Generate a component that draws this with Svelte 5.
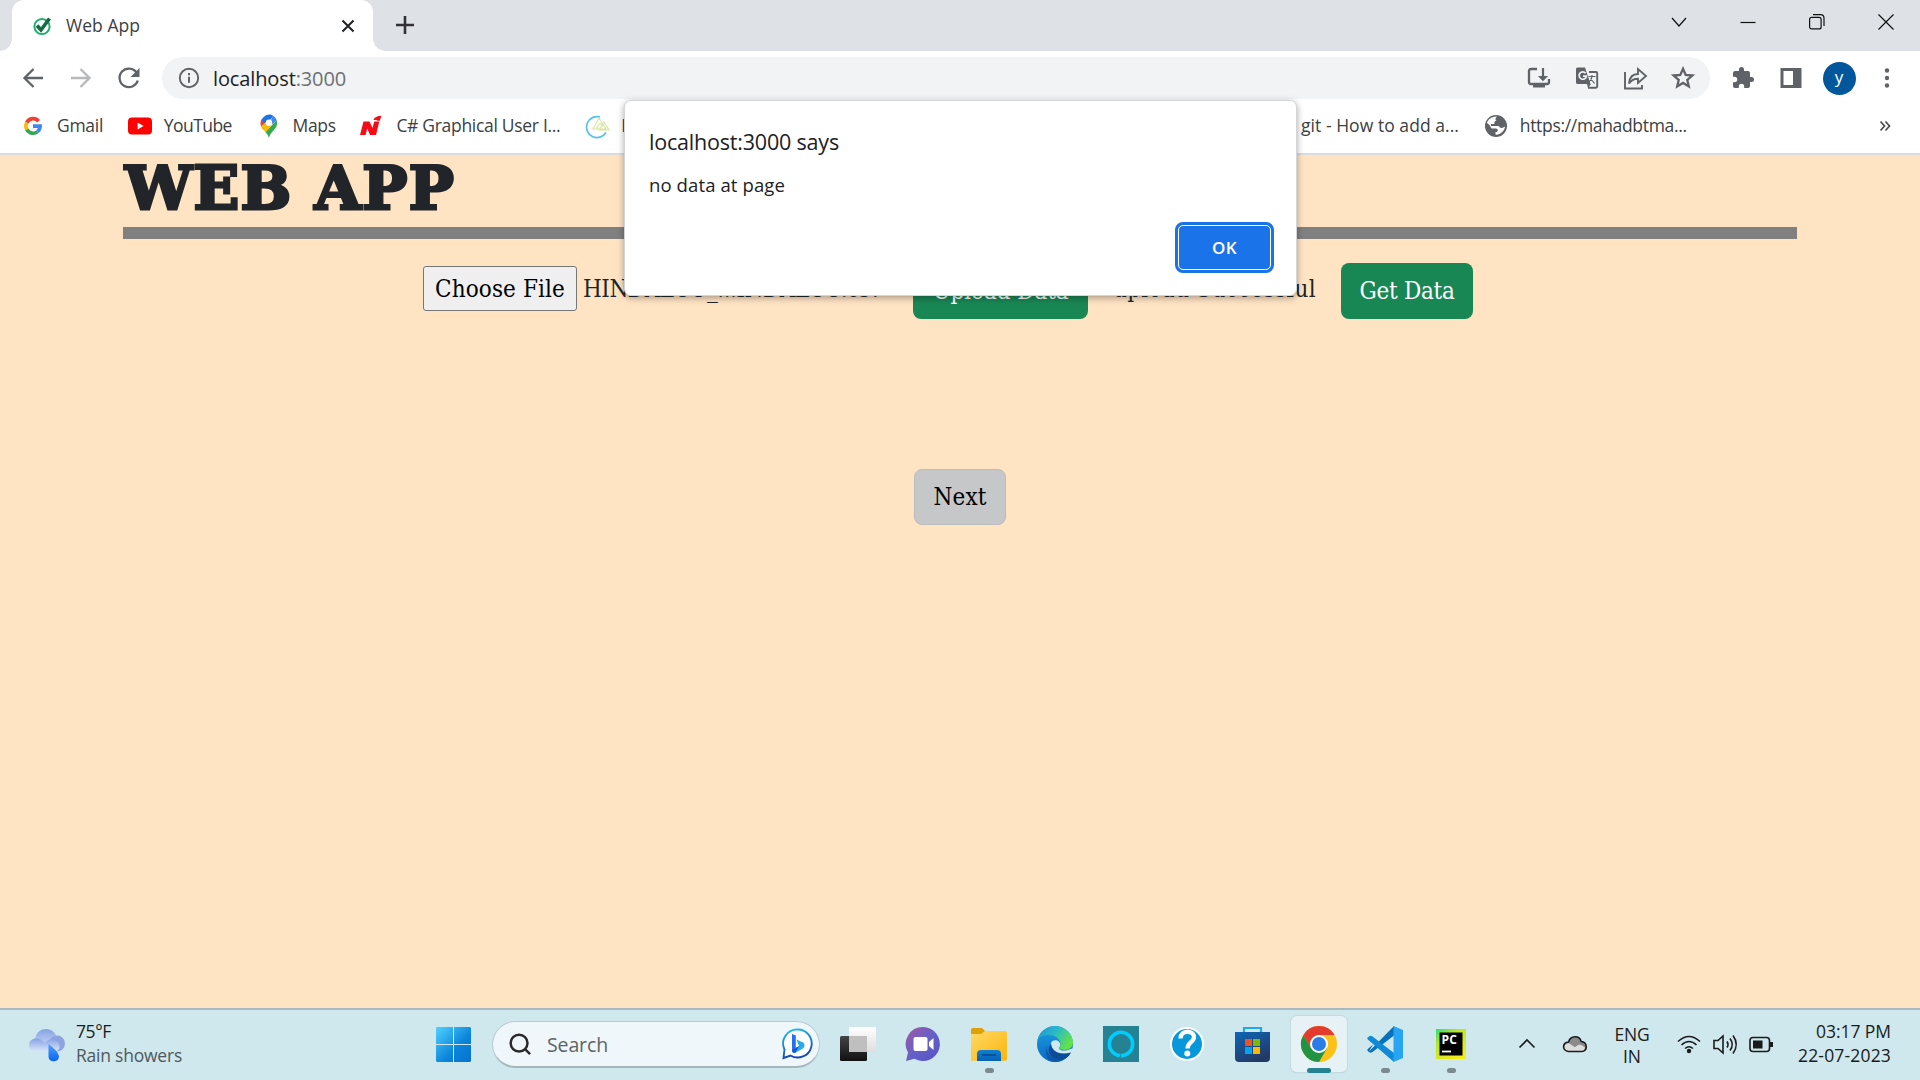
<script>
  const bookmarks = [
    { icon: 'google', label: 'Gmail', width: 46 },
    { icon: 'youtube', label: 'YouTube', width: 68 },
    { icon: 'maps', label: 'Maps', width: 43 },
    { icon: 'ni', label: 'C# Graphical User I...', width: 164 },
    { icon: 'triangles', label: 'F', width: 619 },
    { icon: 'blank', label: 'git - How to add a...', width: 158 },
    { icon: 'globe', label: 'https://mahadbtma...', width: 167 },
  ];

  const apps = [
    { icon: 'taskview' },
    { icon: 'chat' },
    { icon: 'explorer', running: true },
    { icon: 'edge' },
    { icon: 'alexa' },
    { icon: 'help' },
    { icon: 'store' },
    { icon: 'chrome', active: true },
    { icon: 'vscode', running: true },
    { icon: 'pycharm', running: true },
  ];

  // Spaces the letters of a label so that it fills the given width.
  function fit(node, width) {
    const natural = node.getBoundingClientRect().width;
    const count = node.textContent.length;
    if (count > 1) node.style.letterSpacing = `${(width - natural) / count}px`;
  }
</script>

{#snippet bookmarkIcon(name)}
  <svg class="bm-icon" viewBox="0 0 24 24">
    {#if name === 'google'}
      <g fill="none" stroke-width="3.7">
        <path d="M17.6 7.2A7.1 7.1 0 0 0 5.8 8.6" stroke="#ea4335" />
        <path d="M5.8 8.6a7.1 7.1 0 0 0 0 6.8" stroke="#fbbc05" />
        <path d="M5.8 15.4a7.1 7.1 0 0 0 10.8 2.2" stroke="#34a853" />
        <path d="M16.6 17.6A7.1 7.1 0 0 0 19.1 12.1H12" stroke="#4285f4" />
      </g>
    {:else if name === 'youtube'}
      <rect y="3.6" width="24" height="16.8" rx="4" fill="#f00" />
      <path d="M9.6 8.4v7.2l6-3.6z" fill="#fff" />
    {:else if name === 'maps'}
      <path d="M4.6 5.2 12 11 6.4 15.8C4.4 13 3.5 11.4 3.5 9a8 8 0 0 1 1.100-3.800z" fill="#ea4335" />
      <path d="M6.200 3.400A8.300 8.300 0 0 1 12 .6c1.500 0 3.100.400 4.400 1.300L9 10.800 4.600 5.600z" fill="#1a73e8" />
      <path d="M16 1.700A8.400 8.400 0 0 1 19.700 6L9.400 16z" fill="#4285f4" />
      <path d="M4.200 12 9 8l6.500 2-6.800 8.600C7 16.200 5 14.200 4.200 12z" fill="#fbbc04" />
      <path d="M19.700 6c1 3 .3 6-1.400 8.300C15.500 18 13.300 19.400 12 24c-.8-2.400-2-4-3.400-5.700z" fill="#34a853" />
      <circle cx="12" cy="8.700" r="3.200" fill="#fff" />
    {:else if name === 'ni'}
      <path d="M0 21 3.500 7.500h6L12.500 14l1.800-6.500h5L16 21h-6L7.300 14.500 5.500 21z" fill="#f50b16" />
      <path d="m13 5.500 6.500 1.500 2-5h-3.500l-.6 1.700z" fill="#f50b16" />
      <path d="m14.500 5 4.500-2" stroke="#f50b16" stroke-width="2" />
    {:else if name === 'triangles'}
      <path d="M15 3A10.500 10.500 0 1 0 21 18.500" fill="none" stroke="#55c1f2" stroke-width="1.700" />
      <path d="m8 15 6-11 7 11zM11 15l4-6 3 3M14 16l5-8 5 8z" fill="none" stroke="#d7e59a" stroke-width="1.100" />
    {:else if name === 'globe'}
      <circle cx="12" cy="12" r="11" fill="#5f6368" />
      <path d="M3 9c.3-2.500 3-5.400 7-6.300l3-.2c-2 2-2 3-.5 4-2 .5-2.500 1.800-2 3.500H7v2h7c1.500 0 1.700 2 3.500 2 1.500 0 2-1 3.600-1.500-.6 4-3.600 7.500-8.200 8.200l-1.400-.1V18h1.500q2-3-1-3.500H7.500L5.500 11z" fill="#fff" />
    {/if}
  </svg>
{/snippet}

{#snippet appIcon(name)}
  <svg class="app-icon" viewBox="0 0 36 36">
    {#if name === 'taskview'}
      <rect x="1" y="10" width="27" height="25" rx="1.500" fill="url(#tvDark)" />
      <rect x="10" y="1" width="27" height="25" rx="1" fill="url(#tvLight)" />
      <path d="M10 10h18v16H10z" fill="#bfbfbf" />
    {:else if name === 'chat'}
      <path d="M18 1a17 17 0 1 1-8.500 31.800L1 35l2-8.500A17 17 0 0 1 18 1z" fill="url(#chatFill)" />
      <rect x="8.500" y="11" width="14" height="14" rx="2" fill="#fff" />
      <path d="m24 16 4.500-4v12L24 20z" fill="#fff" />
    {:else if name === 'explorer'}
      <path d="M0 4q0-2 2-2h9l4 4-4 6H0z" fill="#dfa004" />
      <path d="M0 8h10l4-3h20q2 0 2 2v26q0 1.700-2 1.700H0z" fill="url(#folderFill)" />
      <path d="M6 35v-7q0-4 4-4h16q4 0 4 4v7z" fill="url(#folderTab)" />
      <path d="M11 29h14" stroke="#064f8f" stroke-width="1.800" />
    {:else if name === 'edge'}
      <circle cx="18" cy="18" r="18" fill="url(#edgeBlue)" />
      <path d="M.4 15A18 18 0 0 1 36 16c.3 5-3.500 8-8.500 8-3 0-5.500-.6-5.500-2.200 0-1 1.500-1.600 1.500-4.200C23 12 17 9 11.500 9 6 9 2 11 .4 15z" fill="url(#edgeGreen)" />
      <path d="M14 14.500c-6 4-5 12 .5 16.500 5 4 12 3 16 0A18 18 0 0 1 17 36C11 35 8 30 9 24c.5-4 2.500-8 5-9.500z" fill="#0a55a5" opacity=".8" />
      <path d="M14.200 16.500c2-4 9.500-2.500 9 2.500-.2 2-1.500 2.300-1.300 3.200.5 2.400 6 3.300 11.600.8L37 22v6l-4 .2c-4 2-8.500 2.200-12-.2-4.500-2.800-8-7.500-6.800-11.500z" fill="#cfe8ee" />
      <path d="M14.200 18c0 6 7 12 19.800 8.500-3.500 7-12 9-17 6C11 29 10 22 14.200 18z" fill="#0b4c98" />
    {:else if name === 'alexa'}
      <path d="M0 0h36v36H0z" fill="#258292" />
      <circle cx="18" cy="18" r="11.700" fill="none" stroke="#0cf" stroke-width="3.500" />
      <path d="m16 32 2-4.500v3.500z" fill="#258292" />
    {:else if name === 'help'}
      <circle cx="18" cy="18" r="16" fill="#0698da" stroke="#fff" stroke-width="2" />
      <path d="M11.500 12.500c0-9 13.500-8.500 13.500-1.500 0 5.500-6.500 5-6.500 11.500" fill="none" stroke="#fff" stroke-width="4.300" />
      <circle cx="18.300" cy="27.600" r="3" fill="#fff" />
    {:else if name === 'store'}
      <path d="M9 8V2h17v6" fill="none" stroke="#22a9e8" stroke-width="2.200" />
      <path d="M0 6h35v26q0 4-4 4H4q-4 0-4-4z" fill="url(#storeFill)" />
      <path d="M10 13h7v7h-7z" fill="#f25022" /><path d="M18 13h7v7h-7z" fill="#7fba00" />
      <path d="M10 21h7v7h-7z" fill="#00a4ef" /><path d="M18 21h7v7h-7z" fill="#ffb900" />
    {:else if name === 'chrome'}
      <circle cx="18" cy="18" r="18" fill="#fbc116" />
      <path d="M2.400 9A18 18 0 0 1 33.600 9H18L10.200 22.500z" fill="#e33b2e" />
      <path d="M2.400 9A18 18 0 0 0 18 36l7.800-13.500H10.200z" fill="#229342" />
      <circle cx="18" cy="18" r="9" fill="#fff" />
      <circle cx="18" cy="18" r="7" fill="#2a7de9" />
    {:else if name === 'vscode'}
      <path d="M2 25.500 27 0v9.500L5.500 26q-2 1.500-3.500 0-2.700-1.800-1.200-3L6 18.500" fill="#0871b9" />
      <path d="M2 10.500q1.500-1.500 3.500 0L27 27v9L.8 13.500q-1.500-1.300 1.200-3z" fill="#1089d6" />
      <path d="m26.500 0 9.500 4v28l-9.500 4z" fill="#27a5f3" />
    {:else if name === 'pycharm'}
      <path d="M3 3h30v30H3z" fill="url(#pcFill)" />
      <path d="M6.500 6.500h23v23h-23z" fill="#000" />
      <path d="M9 25.500h9" stroke="#fff" stroke-width="1.800" />
      <text x="8.600" y="17.800" class="pc">PC</text>
    {/if}
  </svg>
{/snippet}

<div class="screen">
  <svg class="defs" width="0" height="0">
    <defs>
      <linearGradient id="tvDark" x2="0" y2="1"><stop stop-color="#444" /><stop offset="1" stop-color="#111" /></linearGradient>
      <linearGradient id="tvLight" x2="0" y2="1"><stop stop-color="#fff" /><stop offset="1" stop-color="#dedede" /></linearGradient>
      <linearGradient id="chatFill" x2="1" y2="1"><stop stop-color="#a05aa0" /><stop offset=".5" stop-color="#6660c8" /><stop offset="1" stop-color="#5353c4" /></linearGradient>
      <linearGradient id="folderFill" x2="1" y2="1"><stop stop-color="#ffd968" /><stop offset="1" stop-color="#fbb508" /></linearGradient>
      <linearGradient id="folderTab" x2="0" y2="1"><stop stop-color="#0f7fd6" /><stop offset="1" stop-color="#0761b3" /></linearGradient>
      <linearGradient id="edgeBlue" x2="0" y2="1"><stop stop-color="#1aa1dd" /><stop offset="1" stop-color="#0c67c8" /></linearGradient>
      <linearGradient id="edgeGreen" x2="1" y2=".5"><stop stop-color="#1d8fd6" /><stop offset=".5" stop-color="#2bb9c9" /><stop offset="1" stop-color="#62e14a" /></linearGradient>
      <linearGradient id="storeFill" x2=".5" y2="1"><stop stop-color="#0c67b8" /><stop offset="1" stop-color="#233a66" /></linearGradient>
      <linearGradient id="pcFill" x2=".7" y2="1"><stop stop-color="#22e07c" /><stop offset=".35" stop-color="#b6e62c" /><stop offset="1" stop-color="#f3ea1c" /></linearGradient>
      <linearGradient id="winFill" gradientUnits="userSpaceOnUse" x1="0" y1="0" x2="35" y2="35"><stop stop-color="#4fd3ff" /><stop offset=".6" stop-color="#0b84da" /><stop offset="1" stop-color="#0672cf" /></linearGradient>
      <linearGradient id="bingFill" x2=".3" y2="1"><stop stop-color="#21c7f3" /><stop offset="1" stop-color="#1746b5" /></linearGradient>
      <linearGradient id="cloudFill" x2="0" y2="1"><stop stop-color="#86a2e4" /><stop offset="1" stop-color="#dbe5fb" /></linearGradient>
      <linearGradient id="dropFill" x2="0" y2="1"><stop stop-color="#4ea3fb" /><stop offset="1" stop-color="#0a63f2" /></linearGradient>
    </defs>
  </svg>

  <header class="tabstrip">
    <div class="tab">
      <svg class="favicon" viewBox="0 0 20 20">
        <circle cx="10" cy="10.500" r="7.600" fill="none" stroke="#1fae6c" stroke-width="2" />
        <path d="m5 9.500 4 4.500 8.500-11.500" fill="none" stroke="#146c43" stroke-width="3.600" />
      </svg>
      <span class="tab-title" use:fit={74}>Web App</span>
      <svg class="tab-close" viewBox="0 0 14 14"><path d="m1.500 1.500 11 11m0-11-11 11" /></svg>
    </div>
    <svg class="new-tab" viewBox="0 0 18 18"><path d="M9 0v18M0 9h18" /></svg>
    <div class="window-controls">
      <svg viewBox="0 0 18 18"><path d="m2 5 7 8 7-8" /></svg>
      <svg viewBox="0 0 18 18"><path d="M1.500 9.500h15" /></svg>
      <svg viewBox="0 0 18 18"><rect x="1.600" y="4.400" width="11.500" height="11.500" rx="2" /><path d="M5 1.700h7.500q3.500 0 3.500 3.500V13" /></svg>
      <svg viewBox="0 0 18 18"><path d="m1.500 1.500 15 15m0-15-15 15" /></svg>
    </div>
  </header>

  <nav class="toolbar">
    <div class="cell"><svg viewBox="0 0 24 24"><path d="M22 12H4M12.500 3 3.500 12l9 9" class="line" /></svg></div>
    <div class="cell faded"><svg viewBox="0 0 24 24"><path d="M2 12h18M11.500 3l9 9-9 9" class="line" /></svg></div>
    <div class="cell">
      <svg viewBox="0 0 24 24"><path d="M19.500 6.500A9.300 9.300 0 1 0 20.800 14.500" class="line" /><path d="M22.500 2v9h-9z" /></svg>
    </div>
    <div class="omnibox">
      <svg viewBox="0 0 24 24"><circle cx="12" cy="12" r="9.200" class="line thin" /><path d="M11 10.800h2v6h-2zM11 7h2v2.200h-2z" /></svg>
      <span class="url" use:fit={133}>localhost<i>:3000</i></span>
      <div class="omni-actions">
        <div class="cell"><svg viewBox="0 0 24 24"><path d="M10 3H4q-2 0-2 2v11q0 2 2 2h16q2 0 2-2v-3" class="line" /><path d="M6 18h12v3.500H6zM14.900 2h2.200v8h4L16 15.200 10.900 10h4z" /></svg></div>
        <div class="cell"><svg viewBox="0 0 24 24"><path d="M14 6h7q1.200 0 1.200 1.200v13.300q0 1.200-1.200 1.200h-8" class="line thin" /><path d="M2.500 1.500H10L15.500 18h-13Q1 18 1 16.500V3q0-1.500 1.500-1.500zM12 18h4l-3 4z" /><path d="M10.700 7.200a3.700 3.700 0 1 0 .8 2.900H8" fill="none" stroke="#f1f3f4" stroke-width="1.700" /><path d="M13.500 10.500h7M17 9v1.500c0 2-2 4.500-3 5.500m1.500-3.500 4 5" class="line hair" /></svg></div>
        <div class="cell"><svg viewBox="0 0 24 24"><path d="M2 6v16.500h17V19" class="line thin" /><path d="M6 17.500c.5-6 3.500-9.500 9-9.500V3l8 7-8 7v-4.300c-4 0-6.500 1-9 4.800z" class="line thin" /></svg></div>
        <div class="cell"><svg viewBox="0 0 24 24"><path d="m12 2.800 2.700 6.100 6.700.6-5.100 4.400 1.500 6.500-5.800-3.500-5.800 3.500 1.500-6.500-5.100-4.400 6.700-.6z" class="line" /></svg></div>
      </div>
    </div>
    <div class="cell first"><svg viewBox="0 0 24 24"><path d="M20.500 11H19V7q0-2-2-2h-4V3.500a2.500 2.500 0 0 0-5 0V5H4Q2 5 2 7v3.800h1.500a2.700 2.700 0 0 1 0 5.400H2V20q0 2 2 2h3.800v-1.500a2.700 2.700 0 0 1 5.400 0V22H17q2 0 2-2v-4h1.500a2.500 2.500 0 0 0 0-5z" /></svg></div>
    <div class="cell"><svg viewBox="0 0 24 24"><path d="M1.500 2h21v20h-21zM4.500 5v14h9.500V5z" fill-rule="evenodd" /></svg></div>
    <div class="cell"><div class="avatar">y</div></div>
    <div class="cell"><svg viewBox="0 0 24 24"><circle cx="12" cy="4.500" r="2.200" /><circle cx="12" cy="12" r="2.200" /><circle cx="12" cy="19.500" r="2.200" /></svg></div>
  </nav>

  <div class="bookmarks">
    {#each bookmarks as b}
      <div class="bookmark">
        {@render bookmarkIcon(b.icon)}
        <div class="bm-label" style:width="{b.width}px"><span use:fit={b.label === 'F' ? 9 : b.width}>{b.label}</span></div>
      </div>
    {/each}
    <svg class="more" viewBox="0 0 12 12"><path d="m1.500 1.500 4 4.500-4 4.500M6.500 1.500l4 4.500-4 4.500" /></svg>
  </div>

  <main>
    <h1><span use:fit={330}>WEB APP</span></h1>
    <hr />
    <section class="controls">
      <button class="choose"><span use:fit={130}>Choose File</span></button>
      <div class="filename"><span use:fit={298}>HINDALCO_...INDALCO.csv</span></div>
      <button class="green upload"><span use:fit={136}>Upload Data</span></button>
      <div class="status"><span use:fit={203}>upload Successful</span></div>
      <button class="green get"><span use:fit={95}>Get Data</span></button>
    </section>
    <button class="next"><span use:fit={53}>Next</span></button>
  </main>

  <footer class="taskbar">
    <div class="weather">
      <svg viewBox="0 0 36 34">
        <circle cx="17" cy="12" r="11" fill="url(#cloudFill)" />
        <circle cx="28" cy="15.500" r="8" fill="#8ea4e0" />
        <path d="M6.500 10.500c5 0 7 2 9 4.500 4-4 7-4.500 12-2 5 3 4 10.500-2 10.500H6.500a6.500 6.500 0 0 1 0-13z" fill="url(#cloudFill)" />
        <path d="M19.500 16q9.500 7 10.500 12a5.300 5.300 0 0 1-10.500 1z" fill="url(#dropFill)" />
      </svg>
      <div class="two-line">
        <span use:fit={35}>75°F</span>
        <span class="muted" use:fit={106}>Rain showers</span>
      </div>
    </div>

    <svg class="start" viewBox="0 0 35 35"><path d="M1 0h16v17H0V1zM18 0h16l1 1v16H18zM0 18h17v17H1l-1-1zM18 18h17v16l-1 1H18z" fill="url(#winFill)" /></svg>
    <div class="search">
      <svg class="glass" viewBox="0 0 24 24"><circle cx="10.500" cy="10.500" r="8.800" /><path d="m16.500 16.500 5.500 5.500" /></svg>
      <span use:fit={61}>Search</span>
      <svg class="bing" viewBox="0 0 30 32">
        <path d="M15.500 1.500a14 14 0 1 1-7 26L1.500 30l1-8.500A14 14 0 0 1 15.500 1.500z" fill="#fff" stroke="url(#bingFill)" stroke-width="1.900" />
        <path d="m10 6 3.800 1.500v12L10 24.500z" fill="#2570ee" />
        <path d="m14.500 11.500 7 3.300q2.500 3.500-1 6L13 25q-3 .8-3-2.500l7-4.500z" fill="#28a9ee" />
        <path d="m10 22 7-4-3.500 6.500q-3 1-3.500-2.500z" fill="#1d50d2" />
      </svg>
    </div>
    <div class="apps">
      {#each apps as app}
        <div class="app" class:active={app.active} class:running={app.running}>
          {@render appIcon(app.icon)}
        </div>
      {/each}
    </div>

    <div class="tray">
      <div class="cell"><svg viewBox="0 0 24 24"><path d="m4.500 15.500 7.500-7.500 7.500 7.500" class="ink" /></svg></div>
      <div class="cell">
        <svg viewBox="0 0 24 24">
          <path d="M5 19.500C-1.500 18-.5 10.500 5.500 10 7.500 3 16.500 3 18.200 9.500c6.500.5 6.800 9 .5 10z" fill="#8b8b8b" />
          <path d="M5 19.500C-1 18-.5 13 5.500 11l13 8.500zM5 19.500l11-7q3 .5 6 3-.3 3.500-3.500 4z" fill="#dedede" />
          <path d="M5.200 19.500C-1.500 18-.5 10.500 5.500 10 7.500 3 16.500 3 18.200 9.500c6.500.5 6.800 10 .5 10z" class="ink" />
        </svg>
      </div>
      <div class="language">
        <span use:fit={35}>ENG</span>
        <span use:fit={18}>IN</span>
      </div>
      <div class="status-icons">
        <svg viewBox="0 0 24 24"><path d="M1 9.500Q12-.500 23 9.500M4.500 13q7.500-7 15 0M8 16.500q4-3.500 8 0" class="ink" /><circle cx="12" cy="19" r="2.200" /></svg>
        <svg viewBox="0 0 24 24"><path d="M1 8.500h4L10 4v17l-5-4.500H1zM14 9.500q2 3 0 6M17 6.500q4.500 6 0 12M20 3.500q6.500 9 0 18" class="ink" /></svg>
        <svg viewBox="0 0 24 24"><rect x="1" y="5.500" width="19.500" height="14" rx="3" class="ink" /><path d="M4 8.500h9.500v8H4zM21 10h3v5h-3z" /></svg>
      </div>
      <div class="clock">
        <span use:fit={75}>03:17 PM</span>
        <span use:fit={93}>22-07-2023</span>
      </div>
    </div>
  </footer>

  <div class="dialog" role="alertdialog">
    <div class="dialog-title"><span use:fit={190}>localhost:3000 says</span></div>
    <div class="dialog-text"><span use:fit={136}>no data at page</span></div>
    <button class="ok"><span use:fit={25}>OK</span></button>
  </div>
</div>

<style>
  :global(body) { margin: 0; overflow: hidden; }
  * { box-sizing: border-box; }
  .screen {
    position: relative;
    width: 1920px;
    height: 1080px;
    display: flex;
    flex-direction: column;
    font-family: 'Open Sans', 'Noto Sans', sans-serif;
    font-size: 17.500px;
    background: #fff;
    overflow: hidden;
  }
  .defs { position: absolute; }
  svg { display: block; flex: none; overflow: visible; }
  span { white-space: nowrap; }
  button { font: inherit; padding: 0; margin: 0; flex: none; }

  .tabstrip { height: 51px; flex: none; display: flex; background: #dee1e6; }
  .tab {
    position: relative;
    width: 361px;
    margin-left: 12px;
    padding: 0 18px 0 20px;
    display: flex;
    align-items: center;
    background: #fff;
    border-radius: 12px 12px 0 0;
  }
  .tab::before, .tab::after {
    content: '';
    position: absolute;
    bottom: 0;
    width: 12px;
    height: 12px;
  }
  .tab::before { left: -12px; background: radial-gradient(circle at 0 0, #dee1e6 11.500px, #fff 12px); }
  .tab::after { right: -12px; background: radial-gradient(circle at 100% 0, #dee1e6 11.500px, #fff 12px); }
  .favicon { width: 20px; height: 20px; margin-right: 14px; }
  .tab-title { color: #3c4043; padding-bottom: 1px; }
  .tab-close { width: 14px; height: 14px; margin-left: auto; stroke: #202124; stroke-width: 2; }
  .new-tab { width: 18px; height: 18px; margin: 16px 0 0 23px; stroke: #303236; stroke-width: 2.600; }
  .window-controls { margin: 13px 25px 0 auto; display: flex; gap: 51px; }
  .window-controls svg { width: 18px; height: 18px; fill: none; stroke: #111; stroke-width: 1.200; }

  .toolbar { height: 51px; flex: none; display: flex; align-items: center; padding: 3px 0 0 9px; }
  .cell { width: 48px; flex: none; display: flex; justify-content: center; align-items: center; color: #5f6368; }
  .cell svg, .omnibox > svg { width: 24px; height: 24px; fill: #5f6368; }
  .faded { opacity: .45; }
  .line { fill: none; stroke: #5f6368; stroke-width: 2.300; }
  .thin { stroke-width: 1.900; }
  .hair { stroke-width: 1.200; }
  .omnibox {
    width: 1548px;
    height: 42px;
    flex: none;
    margin-left: 9px;
    padding: 0 3px 0 15px;
    display: flex;
    align-items: center;
    border-radius: 21px;
    background: #f1f3f4;
  }
  .url { margin-left: 12px; font-size: 20px; color: #202124; }
  .url i { font-style: normal; color: #6d7175; }
  .omni-actions { margin-left: auto; display: flex; }
  .first { margin-left: 9px; }
  .avatar { width: 33px; height: 33px; border-radius: 50%; background: #01579b; color: #fff; text-align: center; line-height: 29px; font-size: 17px; }

  .bookmarks { height: 53px; flex: none; display: flex; align-items: center; padding: 0 29px 4px 21px; gap: 24.800px; border-bottom: 2px solid #dadce0; color: #3c4043; }
  .bookmark { display: flex; align-items: center; gap: 12px; flex: none; }
  .bm-icon { width: 24px; height: 24px; }
  .bm-label { flex: none; display: flex; padding-bottom: 1px; }
  .more { width: 12px; height: 12px; margin-left: auto; fill: none; stroke: #4a4d51; stroke-width: 1.700; }

  main { flex: 1; background: #ffe4c4; color: #212529; font-family: 'DejaVu Serif Condensed', 'DejaVu Serif', serif; font-size: 24px; display: flex; flex-direction: column; align-items: center; }
  h1 {
    width: 1674px;
    height: 72px;
    margin: 0;
    padding-left: 2px;
    font: bold 60px/66px 'DejaVu Serif', serif;
    -webkit-text-stroke: 3px #212529;
  }
  hr { width: 1674px; height: 12px; margin: 0; border: 0; background: #808080; }
  .controls { width: 1674px; height: 230px; padding: 24px 0 0 300px; display: flex; align-items: flex-start; }
  .controls span, .next span { display: block; width: max-content; margin: 0 auto; }
  .choose { width: 154px; height: 45px; margin-top: 3px; border: 1px solid #767676; border-radius: 3px; background: #efefef; color: #000; }
  .filename { width: 297px; margin: 13px 33px 0 6px; line-height: 27px; }
  .green { height: 56px; border: 0; border-radius: 8px; background: #198754; color: #fff; }
  .upload { width: 175px; }
  .status { width: 203px; margin: 13px 25px 0 25px; line-height: 27px; }
  .get { width: 132px; }
  .next { width: 92px; height: 56px; border: 1px solid #b9bbbd; border-radius: 8px; background: #c6c7c8; color: #000; }

  .taskbar { height: 72px; flex: none; display: flex; align-items: center; background: #cfe8ee; border-top: 2px solid #a8b9c1; color: #1b1b1b; }
  .weather { width: 436px; padding: 0 0 1px 29px; display: flex; align-items: center; gap: 11px; flex: none; }
  .weather svg { width: 36px; height: 34px; }
  .two-line, .clock, .language { display: flex; flex-direction: column; line-height: 24px; }
  .two-line { align-items: flex-start; padding-bottom: 3px; }
  .muted { color: #4f595d; }
  .start { width: 35px; height: 35px; margin-bottom: 1px; }
  .search { width: 328px; height: 47px; flex: none; margin: 0 4px 2px 21px; padding: 1px 7px 0 16px; display: flex; align-items: center; border: 1px solid #b6ccd3; border-bottom: 2px solid #a3b7bd; border-radius: 24px; background: #f0f7fa; font-size: 19.500px; color: #5c6468; }
  .glass { width: 23px; height: 23px; margin-right: 15px; fill: none; stroke: #2a2a2a; stroke-width: 2.600; }
  .bing { width: 30px; height: 32px; margin-left: auto; }
  .apps { display: flex; }
  .app { position: relative; width: 56px; height: 56px; margin: 0 5px 2px; display: flex; justify-content: center; align-items: center; border-radius: 6px; }
  .app-icon { width: 36px; height: 36px; }
  .app.active { background: #e7f2f7; box-shadow: 0 0 0 1px #c3dce2, 0 1px 1px #a7bcc2; }
  .app.running::after, .app.active::after { content: ''; position: absolute; bottom: -1px; width: 9px; height: 5px; border-radius: 3px; background: #7b8a8e; }
  .app.active::after { width: 24px; background: #258292; }
  .pc { font: bold 12px 'Open Sans', sans-serif; fill: #fff; }
  .tray { margin-left: 19px; padding-bottom: 2px; display: flex; align-items: center; }
  .tray svg { width: 24px; height: 24px; fill: #1b1b1b; }
  .tray .ink { fill: none; stroke: #1b1b1b; stroke-width: 1.600; }
  .language { width: 66px; align-items: center; line-height: 22px; padding-top: 1px; }
  .status-icons { display: flex; gap: 12px; margin-left: 12px; }
  .clock { width: 118px; align-items: flex-end; padding-bottom: 2px; }

  .dialog {
    position: absolute;
    left: 624px;
    top: 100px;
    width: 673px;
    height: 196px;
    padding: 25px 24px;
    background: #fff;
    border: 1px solid #d3d5d7;
    border-radius: 7px;
    box-shadow: 0 2px 7px rgba(0, 0, 0, .35);
    color: #202124;
  }
  .dialog-title { height: 32px; font-size: 21.500px; line-height: 32px; }
  .dialog-text { height: 28px; margin-top: 13px; font-size: 18.500px; line-height: 28px; }
  .ok { display: block; width: 93px; height: 45px; margin: 26px 1px 0 auto; border: 1.500px solid #fff; border-radius: 5px; background: #1a73e8; box-shadow: 0 0 0 3px #1a73e8; color: #fff; font-size: 17px; font-weight: 600; }
</style>
